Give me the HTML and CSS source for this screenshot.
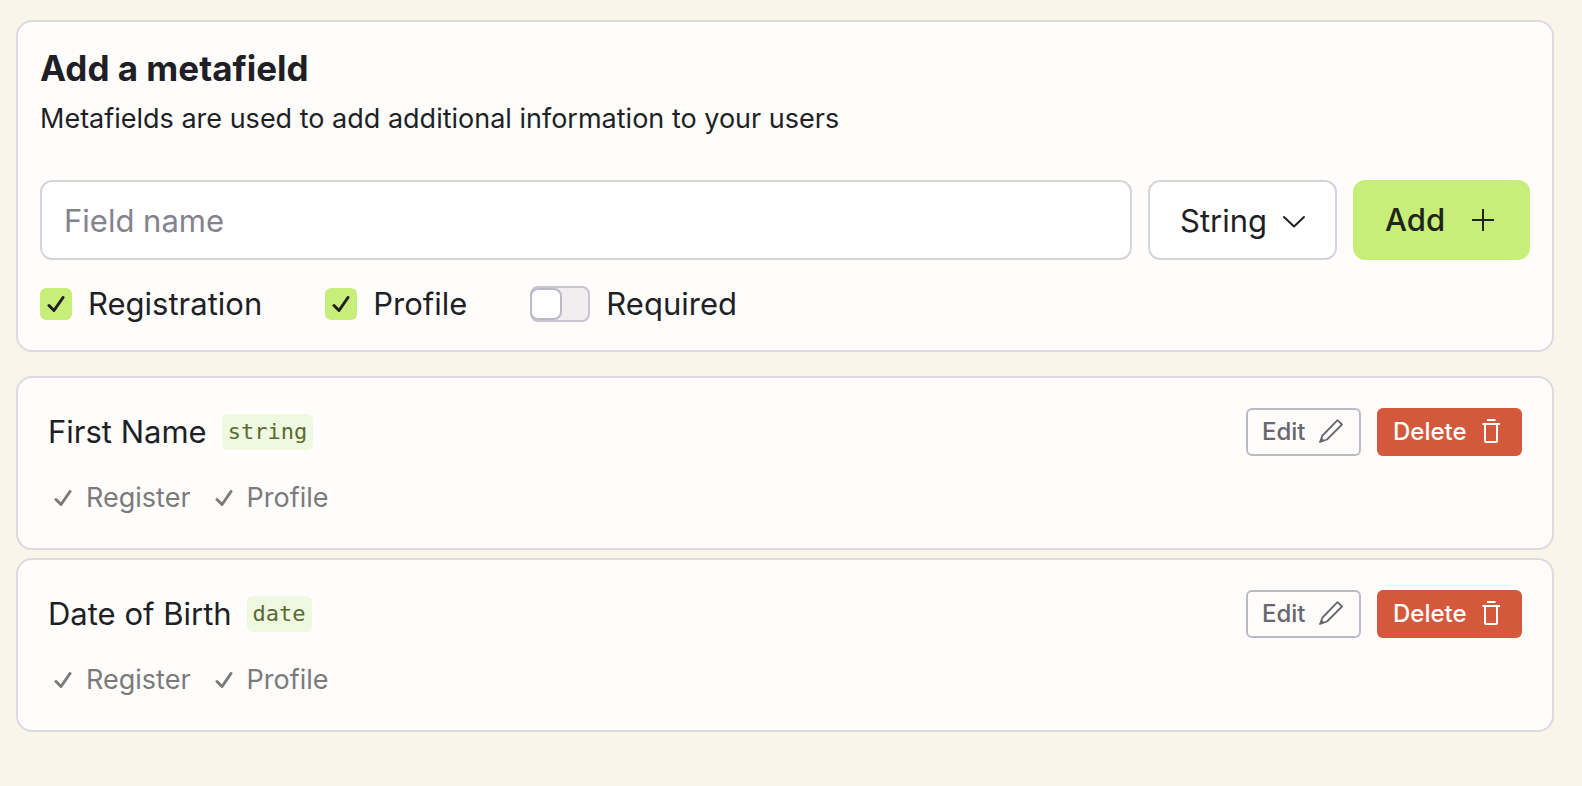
FILE: index.html
```
<!DOCTYPE html>
<html lang="en">
<head>
	<meta charset="utf-8">
	<meta name="viewport" content="width=device-width, initial-scale=1.0">
	<title>Metafields</title>
	<link rel="stylesheet" href="styles.css">
</head>
<body>

	<!-- shared icons -->
	<svg class="sprite" aria-hidden="true">
		<symbol id="check" viewBox="0 0 18 18">
			<path d="M2 10.500l5 5L16 2.500" fill="none" stroke="currentColor" stroke-linecap="round" stroke-linejoin="round"/>
		</symbol>
		<symbol id="pencil" viewBox="0 0 24 24">
			<path d="M1 23L3.500 16.500L18.500 1.200L23 5.500L8 20.500z" fill="none" stroke="currentColor" stroke-width="1.800" stroke-linejoin="round"/>
			<path d="M0.500 23.500L2.500 18.500L5.500 21.500z" fill="currentColor"/>
		</symbol>
		<symbol id="trash" viewBox="0 0 24 24">
			<path d="M8 1h8.500M3.500 5h17.500M6 5v17q0 1 1 1h10q1 0 1-1V5" fill="none" stroke="currentColor" stroke-width="2"/>
		</symbol>
	</svg>

	<main>
		<form class="card add-form">
			<h1>Add a metafield</h1>
			<p class="intro">Metafields are used to add additional information to your users</p>

			<div class="fields">
				<input type="text" class="field-name" placeholder="Field name" aria-label="Field name">
				<div class="select-wrap">
					<select aria-label="Field type">
						<option>String</option>
						<option>Date</option>
					</select>
					<svg class="chevron" viewBox="0 0 24 24" aria-hidden="true">
						<path d="M2 7l10 9.500L22 7" fill="none" stroke="currentColor" stroke-width="2" stroke-linecap="round" stroke-linejoin="round"/>
					</svg>
				</div>
				<button type="button" class="btn-add">
					Add
					<svg viewBox="0 0 22 22" aria-hidden="true"><path d="M11 0v22M0 11h22" stroke="currentColor" stroke-width="2"/></svg>
				</button>
			</div>

			<div class="options">
				<label class="option">
					<span class="tick-box">
						<input type="checkbox" checked>
						<svg aria-hidden="true"><use href="#check"/></svg>
					</span>
					Registration
				</label>
				<label class="option">
					<span class="tick-box">
						<input type="checkbox" checked>
						<svg aria-hidden="true"><use href="#check"/></svg>
					</span>
					Profile
				</label>
				<label class="option">
					<input type="checkbox" role="switch" class="toggle">
					Required
				</label>
			</div>
		</form>

		<section class="list">
			<article class="card item">
				<div class="item-head">
					<h2>First Name</h2>
					<code>string</code>
					<div class="actions">
						<button type="button" class="btn btn-edit">Edit <svg aria-hidden="true"><use href="#pencil"/></svg></button>
						<button type="button" class="btn btn-delete">Delete <svg aria-hidden="true"><use href="#trash"/></svg></button>
					</div>
				</div>
				<ul class="flags">
					<li><svg aria-hidden="true"><use href="#check"/></svg>Register</li>
					<li><svg aria-hidden="true"><use href="#check"/></svg>Profile</li>
				</ul>
			</article>

			<article class="card item">
				<div class="item-head">
					<h2>Date of Birth</h2>
					<code>date</code>
					<div class="actions">
						<button type="button" class="btn btn-edit">Edit <svg aria-hidden="true"><use href="#pencil"/></svg></button>
						<button type="button" class="btn btn-delete">Delete <svg aria-hidden="true"><use href="#trash"/></svg></button>
					</div>
				</div>
				<ul class="flags">
					<li><svg aria-hidden="true"><use href="#check"/></svg>Register</li>
					<li><svg aria-hidden="true"><use href="#check"/></svg>Profile</li>
				</ul>
			</article>
		</section>
	</main>

</body>
</html>
```
FILE: styles.css
```
*, *::before {
	box-sizing: border-box;
}

body {
	margin: 0;
	padding: 20px 28px 20px 16px;
	background: #f9f5e9;
	color: #211f26;
	font-family: Inter, "Liberation Sans", sans-serif;
	font-size: 31px;
	line-height: 40px;
}

h1, h2, p, ul {
	margin: 0;
	padding: 0;
}

input, select, button {
	margin: 0;
	font: inherit;
	color: inherit;
}

svg {
	flex: none;
}

.sprite {
	position: absolute;
	width: 0;
	height: 0;
}

.card {
	border: 2px solid #dcd9e0;
	border-radius: 16px;
	background: #fffdfc;
}

/* add form */

.add-form {
	padding: 22px;
}

h1 {
	padding-top: 4px;
	font-size: 35px;
	font-weight: 700;
	line-height: 40px;
}

.intro {
	padding: 11px 0 41px;
	font-size: 27px;
	line-height: 40px;
}

.fields {
	display: flex;
	gap: 16px;
}

.field-name {
	flex: 1;
	min-width: 0;
	height: 80px;
	padding: 0 22px;
	border: 2px solid #d5d3db;
	border-radius: 12px;
	background: #fff;
}

.field-name::placeholder {
	color: #84828e;
	opacity: 1;
}

.select-wrap {
	position: relative;
}

select {
	width: 189px;
	height: 80px;
	padding: 2px 64px 0 30px;
	border: 2px solid #d5d3db;
	border-radius: 12px;
	background: #fff;
	appearance: none;
}

.chevron {
	position: absolute;
	top: 30px;
	right: 31px;
	width: 24px;
	height: 24px;
	pointer-events: none;
}

.btn-add {
	display: flex;
	align-items: center;
	justify-content: space-between;
	width: 177px;
	height: 80px;
	padding: 0 36px 0 32px;
	border: 0;
	border-radius: 12px;
	background: #c7ee78;
	color: #20241a;
	font-weight: 500;
}

.btn-add svg {
	width: 22px;
	height: 22px;
}

.options {
	display: flex;
	gap: 63px;
	padding: 24px 0 4px;
}

.option {
	display: flex;
	align-items: center;
	gap: 16px;
}

.tick-box {
	display: grid;
	place-items: center;
	width: 32px;
	height: 32px;
}

.tick-box > * {
	grid-area: 1 / 1;
}

.tick-box input {
	width: 32px;
	height: 32px;
	border: 2px solid #bcbac7;
	border-radius: 6px;
	appearance: none;
}

.tick-box input:checked {
	border: 0;
	background: #c7ee78;
}

.tick-box svg {
	display: none;
	width: 18px;
	height: 18px;
	stroke-width: 3;
	pointer-events: none;
}

.tick-box input:checked + svg {
	display: block;
}

.toggle {
	display: flex;
	width: 60px;
	height: 36px;
	border: 2px solid #c8c5d0;
	border-radius: 8px;
	background: #f0eeef;
	appearance: none;
}

.toggle::before {
	content: "";
	width: 32px;
	height: 32px;
	margin-left: -2px;
	border: 2px solid #bcbac7;
	border-radius: 8px;
	background: #fff;
}

.toggle:checked {
	justify-content: flex-end;
	background: #c7ee78;
}

/* saved fields */

.list {
	display: grid;
	gap: 8px;
	margin-top: 24px;
}

.item {
	padding: 30px 30px 28px;
}

.item-head {
	display: flex;
	align-items: center;
	gap: 15px;
	height: 48px;
}

h2 {
	font-size: 31px;
	font-weight: 400;
	line-height: 40px;
}

code {
	padding: 0 6px;
	border-radius: 6px;
	background: #eff8e0;
	color: #5a6b2f;
	font-family: "DejaVu Sans Mono", monospace;
	font-size: 22px;
	line-height: 36px;
}

.actions {
	display: flex;
	gap: 16px;
	margin-left: auto;
}

.btn {
	display: flex;
	align-items: center;
	justify-content: space-between;
	height: 48px;
	padding: 0 16px;
	border: 2px solid #bcbac7;
	border-radius: 6px;
	background: #fffdfc;
	font-size: 24px;
	font-weight: 500;
}

.btn svg {
	width: 24px;
	height: 24px;
	margin-bottom: 2px;
}

.btn-edit {
	width: 115px;
	padding: 0 16px 0 14px;
	color: #68666f;
}

.btn-delete {
	width: 145px;
	padding: 0 19px 0 16px;
	border: 0;
	background: #d4583b;
	color: #fff;
}

.flags {
	display: flex;
	gap: 18px;
	padding-top: 20px;
	color: #7b7a7c;
	font-size: 27px;
	line-height: 44px;
	list-style: none;
}

.flags li {
	display: flex;
	align-items: center;
	gap: 14px;
	padding-left: 6px;
}

.flags svg {
	width: 18px;
	height: 18px;
	stroke-width: 3;
}
```
